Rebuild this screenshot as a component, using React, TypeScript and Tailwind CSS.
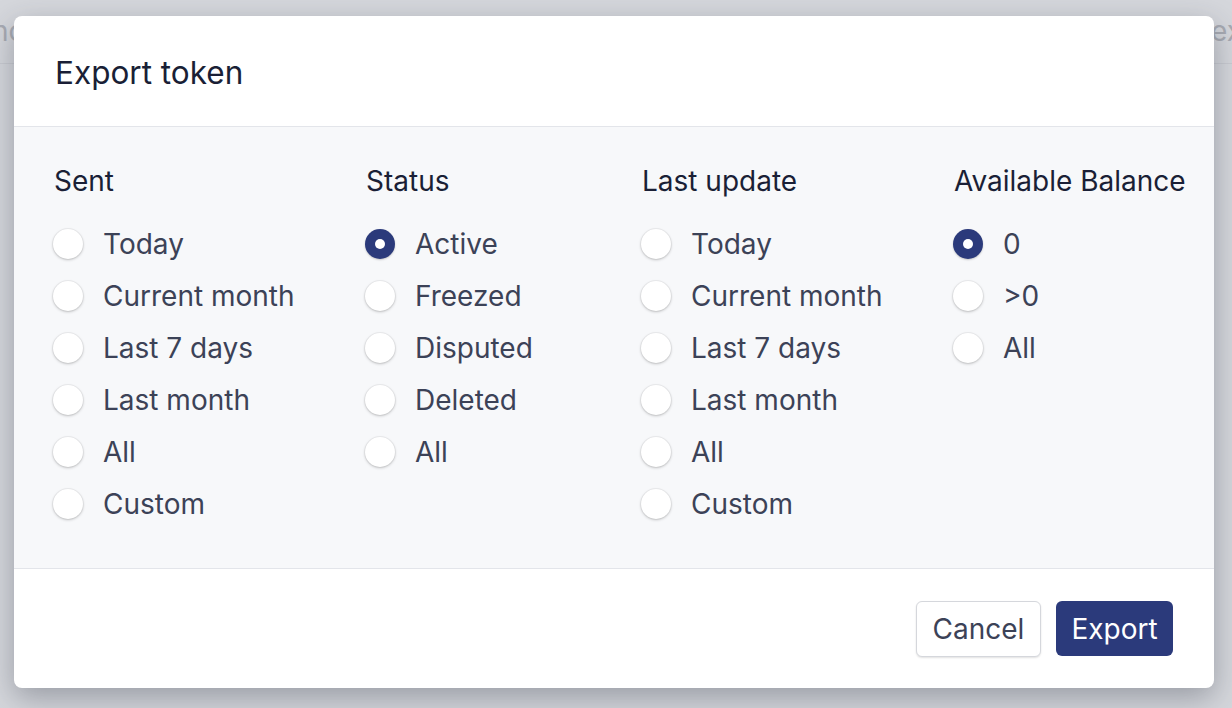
import { useState } from 'react';

type Group = { title: string; width: string; options: string[]; initial: string | null };

const GROUPS: Group[] = [
  { title: 'Sent', width: 'w-[312px]', options: ['Today', 'Current month', 'Last 7 days', 'Last month', 'All', 'Custom'], initial: null },
  { title: 'Status', width: 'w-[276px]', options: ['Active', 'Freezed', 'Disputed', 'Deleted', 'All'], initial: 'Active' },
  { title: 'Last update', width: 'w-[312px]', options: ['Today', 'Current month', 'Last 7 days', 'Last month', 'All', 'Custom'], initial: null },
  { title: 'Available Balance', width: 'flex-1', options: ['0', '>0', 'All'], initial: '0' },
];

function Radio({ checked, label, onSelect }: { checked: boolean; label: string; onSelect: () => void }) {
  return (
    <button type="button" onClick={onSelect} className="flex h-[52px] items-center text-left">
      {checked ? (
        <span className="flex h-[30px] w-[30px] shrink-0 items-center justify-center rounded-full bg-[#2b3a7b] shadow-[0_1px_2px_rgba(0,0,0,0.2)]">
          <span className="h-[10px] w-[10px] rounded-full bg-white" />
        </span>
      ) : (
        <span className="h-[30px] w-[30px] shrink-0 rounded-full bg-white shadow-[0_1px_3px_rgba(0,0,0,0.22),0_0_0_1px_rgba(0,0,0,0.04)]" />
      )}
      <span className="ml-[20px] text-[28px] leading-none text-[#3c4257]">{label}</span>
    </button>
  );
}

function Column({ group }: { group: Group }) {
  const [value, setValue] = useState<string | null>(group.initial);
  return (
    <div className={group.width}>
      <div className="pl-[1px] text-[28px] leading-[32px] text-[#1a1f36]">{group.title}</div>
      <div className="mt-[21px] flex flex-col">
        {group.options.map((o) => (
          <Radio key={o} label={o} checked={value === o} onSelect={() => setValue(o)} />
        ))}
      </div>
    </div>
  );
}

export default function App() {
  return (
    <div
      className="relative h-[708px] w-[1232px] overflow-hidden bg-[#d5d7dc]"
      style={{ fontFamily: 'Inter, "Noto Sans", sans-serif' }}
    >
      {/* page behind the overlay */}
      <div className="flex h-[64px] items-start justify-between border-b border-[#c9cbd1] pt-[10px] text-[28px] text-[#a8abb3]">
        <span className="-ml-[8px]">nc</span>
        <span className="-mr-[10px]">ex</span>
      </div>

      {/* modal */}
      <div className="absolute left-[14px] top-[16px] w-[1200px] overflow-hidden rounded-[8px] bg-white shadow-[0_10px_30px_rgba(40,45,60,0.35)]">
        <div className="flex h-[111px] items-center border-b border-[#e3e5ea] px-[41px] pt-[3px]">
          <h2 className="text-[31.5px] font-normal leading-none text-[#1a1f36]">Export token</h2>
        </div>

        <div className="flex bg-[#f7f8fa] pb-[38px] pl-[39px] pt-[38px]">
          {GROUPS.map((g) => (
            <Column key={g.title} group={g} />
          ))}
        </div>

        <div className="flex h-[120px] items-center justify-end gap-[15px] border-t border-[#e3e5ea] px-[41px]">
          <button
            type="button"
            className="h-[56px] w-[125px] rounded-[6px] border border-[#d5d7dc] bg-white text-[28px] leading-none text-[#3c4257] shadow-[0_1px_2px_rgba(0,0,0,0.12)]"
          >
            Cancel
          </button>
          <button type="button" className="h-[55px] w-[117px] rounded-[6px] bg-[#2b3a7b] text-[28px] leading-none text-white">
            Export
          </button>
        </div>
      </div>
    </div>
  );
}
